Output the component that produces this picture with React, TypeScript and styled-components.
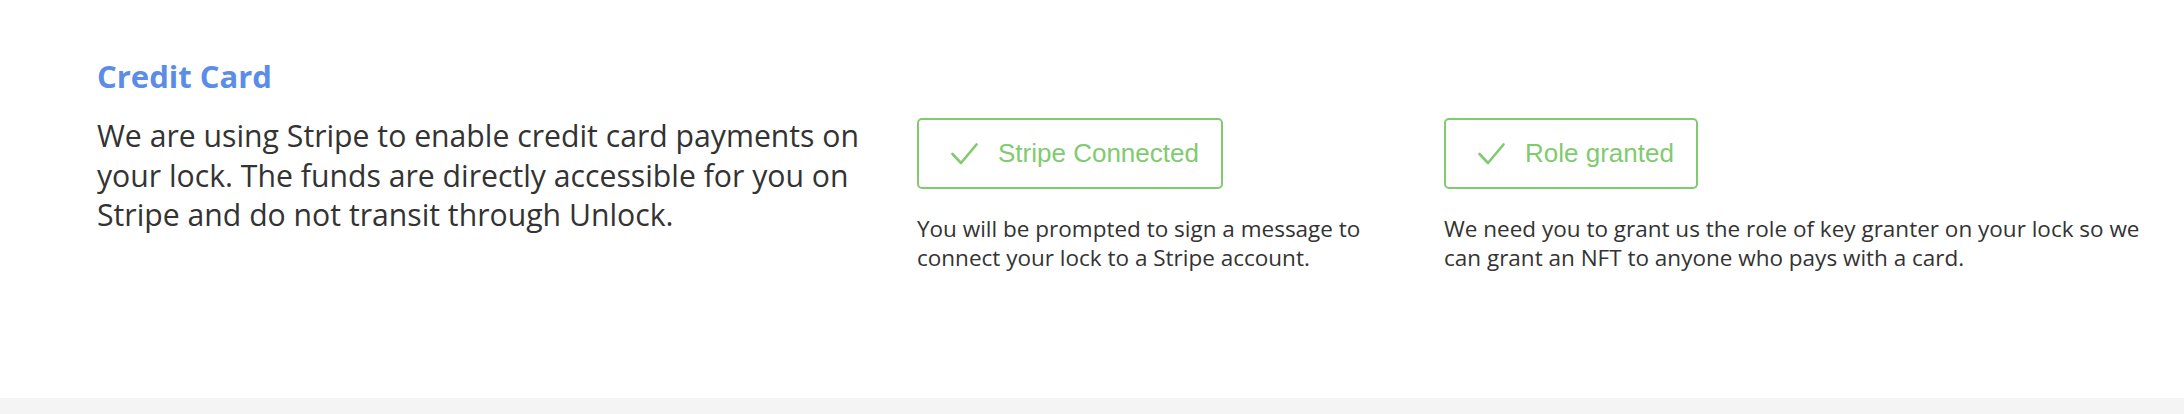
import React from "react";
import styled, { createGlobalStyle } from "styled-components";

const GlobalStyle = createGlobalStyle`
  html, body {
    margin: 0;
    padding: 0;
    background: #f4f4f4;
  }
  body {
    font-family: "Open Sans", Roboto, "Liberation Sans", sans-serif;
    color: #333333;
  }
`;

const Section = styled.section`
  background: #ffffff;
  height: 398px;
  box-sizing: border-box;
  padding: 58px 0 0 97px;
  box-shadow: 0 2px 14px rgba(0, 0, 0, 0.04);
`;

const Title = styled.h2`
  margin: 0 0 22px;
  font-size: 31px;
  line-height: 36px;
  font-weight: 700;
  color: #5b8de8;
`;

const Row = styled.div`
  display: grid;
  grid-template-columns: 820px 527px 720px;
  align-items: start;
`;

const Intro = styled.p`
  margin: 0;
  max-width: 805px;
  font-size: 30.2px;
  line-height: 39.5px;
  font-weight: 400;
  color: #333333;
`;

const Step = styled.div`
  display: flex;
  flex-direction: column;
  align-items: flex-start;
  padding-top: 2px;
`;

const DoneButton = styled.div`
  display: flex;
  align-items: center;
  gap: 20px;
  height: 71px;
  box-sizing: border-box;
  padding: 0 22px 0 32px;
  border: 2px solid #80cb6f;
  border-radius: 5px;
  font-family: "Liberation Sans", Arial, sans-serif;
  font-size: 26px;
  color: #80cb6f;
`;

const Note = styled.p<{ $width: number }>`
  margin: 25px 0 0;
  max-width: ${(p) => p.$width}px;
  font-size: 22.5px;
  line-height: 29px;
  color: #333333;
`;

const Check = () => (
  <svg width="27" height="22" viewBox="0 0 27 22" fill="none">
    <path d="M1.5 11 L10 20 L25.5 1.5" stroke="#80cb6f" strokeWidth="2.6" strokeLinecap="round" strokeLinejoin="round" />
  </svg>
);

const steps = [
  {
    label: "Stripe Connected",
    note: "You will be prompted to sign a message to connect your lock to a Stripe account.",
    width: 480,
  },
  {
    label: "Role granted",
    note: "We need you to grant us the role of key granter on your lock so we can grant an NFT to anyone who pays with a card.",
    width: 705,
  },
];

export default function App() {
  return (
    <>
      <GlobalStyle />
      <Section>
        <Title>Credit Card</Title>
        <Row>
          <Intro>
            We are using Stripe to enable credit card payments on your lock. The funds are directly accessible for you
            on Stripe and do not transit through Unlock.
          </Intro>
          {steps.map((s) => (
            <Step key={s.label}>
              <DoneButton>
                <Check />
                <span>{s.label}</span>
              </DoneButton>
              <Note $width={s.width}>{s.note}</Note>
            </Step>
          ))}
        </Row>
      </Section>
    </>
  );
}
